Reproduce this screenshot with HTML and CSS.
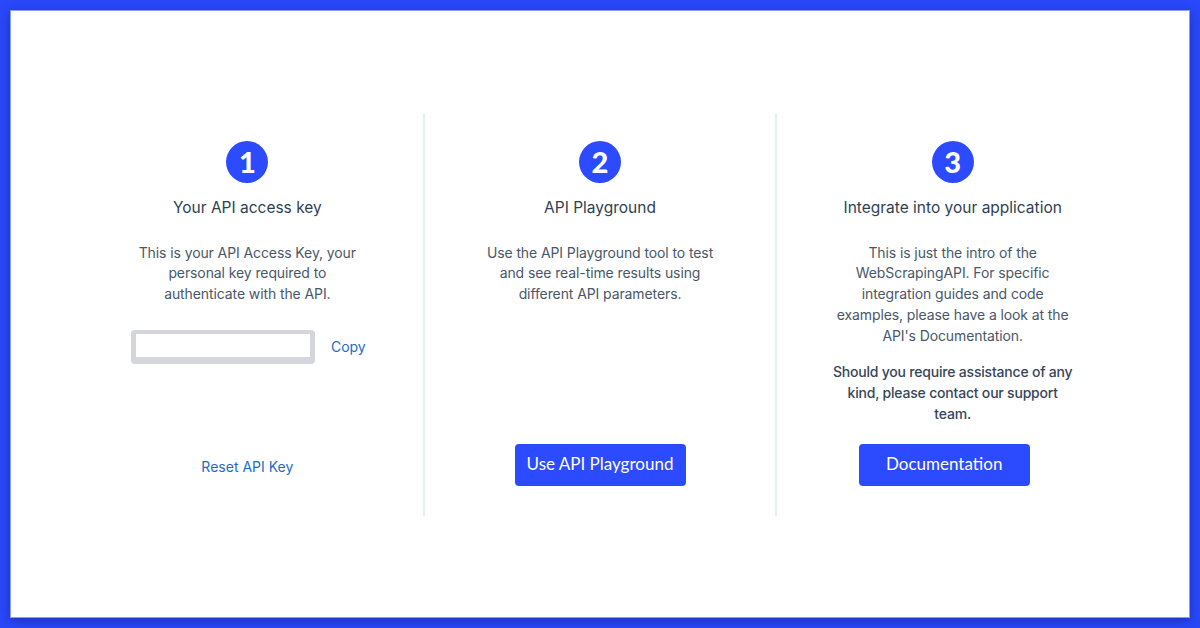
FILE: index.html
```html
<!DOCTYPE html>
<html lang="en">
<head>
  <meta charset="UTF-8">
  <meta name="viewport" content="width=device-width, initial-scale=1.0">
  <title>Getting Started</title>
  <link rel="stylesheet" href="styles.css">
</head>
<body>
  <div class="panel">
    <div class="steps">
      <!-- step 1 -->
      <div class="step">
        <div class="step-num">1</div>
        <h3 class="step-title">Your API access key</h3>
        <p class="step-text key-text">This is your API Access Key, your personal key required to authenticate with the API.</p>
        <div class="key-row">
          <input class="key-input" type="text" value="">
          <a href="#" class="link copy">Copy</a>
        </div>
        <div class="step-footer">
          <a href="#" class="link reset">Reset API Key</a>
        </div>
      </div>

      <!-- step 2 -->
      <div class="step">
        <div class="step-num">2</div>
        <h3 class="step-title">API Playground</h3>
        <p class="step-text narrow">Use the API Playground tool to test and see real-time results using different API parameters.</p>
        <div class="step-footer">
          <a href="#" class="btn">Use API Playground</a>
        </div>
      </div>

      <!-- step 3 -->
      <div class="step">
        <div class="step-num">3</div>
        <h3 class="step-title">Integrate into your application</h3>
        <p class="step-text">This is just the intro of the WebScrapingAPI. For specific integration guides and code examples, please have a look at the API's Documentation.</p>
        <p class="step-text strong">Should you require assistance of any kind, please contact our support team.</p>
        <div class="step-footer">
          <a href="#" class="btn shift">Documentation</a>
        </div>
      </div>
    </div>
  </div>
</body>
</html>
```

FILE: styles.css
```css
html, body {
  height: 100%;
}

body {
  margin: 0;
  padding: 10px;
  box-sizing: border-box;
  background: #2a48f8;
  font-family: Inter, "Noto Sans", Arial, sans-serif;
}

/* white card */
.panel {
  height: 100%;
  box-sizing: border-box;
  background: #fff;
  border: 1px solid #8c9cf3;
  box-shadow: 0 3px 10px rgba(10, 20, 120, 0.45);
  display: flex;
  align-items: center;
  padding: 0 61px;
}

.steps {
  display: flex;
  width: 100%;
  height: 403px;
}

.step {
  flex: 1;
  display: flex;
  flex-direction: column;
  align-items: center;
  padding: 28px 0 30px;
}

.step + .step {
  border-left: 2px solid #e9eef0;
}

.step-num {
  width: 42px;
  height: 42px;
  border-radius: 50%;
  background: #2c4bff;
  color: #fff;
  font-family: Lato, sans-serif;
  font-weight: 900;
  font-size: 29px;
  line-height: 42px;
  text-align: center;
}

.step-title {
  margin: 13px 0 0;
  font-size: 15.5px;
  line-height: 24px;
  font-weight: 400;
  color: #2f3f53;
}

.step-text {
  margin: 23px 0 0;
  max-width: 245px;
  font-size: 14px;
  line-height: 20.8px;
  color: #4a5768;
  text-align: center;
  letter-spacing: -0.1px;
}

.step-text.key-text {
  max-width: 225px;
}

.step-text.narrow {
  max-width: 240px;
}

.step-text.strong {
  margin-top: 16px;
  max-width: 250px;
  font-weight: 500;
  color: #36465a;
  letter-spacing: -0.2px;
}

.key-row {
  display: flex;
  align-items: center;
  margin-top: 25px;
  padding-left: 2px;
}

.key-input {
  width: 184px;
  height: 34px;
  box-sizing: border-box;
  border: 5px solid #d4d6dc;
  border-top-width: 4px;
  border-bottom-width: 7px;
  border-radius: 4px;
  background: #fff;
  outline: none;
}

.link {
  color: #1e6cc8;
  font-size: 14px;
  text-decoration: none;
}

.copy {
  margin-left: 16px;
}

.reset {
  margin-top: 3px;
}

.step-footer {
  margin-top: auto;
  height: 42px;
  display: flex;
  align-items: center;
}

.btn {
  display: block;
  width: 171px;
  height: 42px;
  line-height: 40px;
  box-sizing: border-box;
  background: #2c4bff;
  color: #fff;
  border-radius: 4px;
  text-align: center;
  text-decoration: none;
  font-family: Lato, sans-serif;
  font-size: 17px;
}

.btn.shift {
  margin-right: 17px;
}
```
